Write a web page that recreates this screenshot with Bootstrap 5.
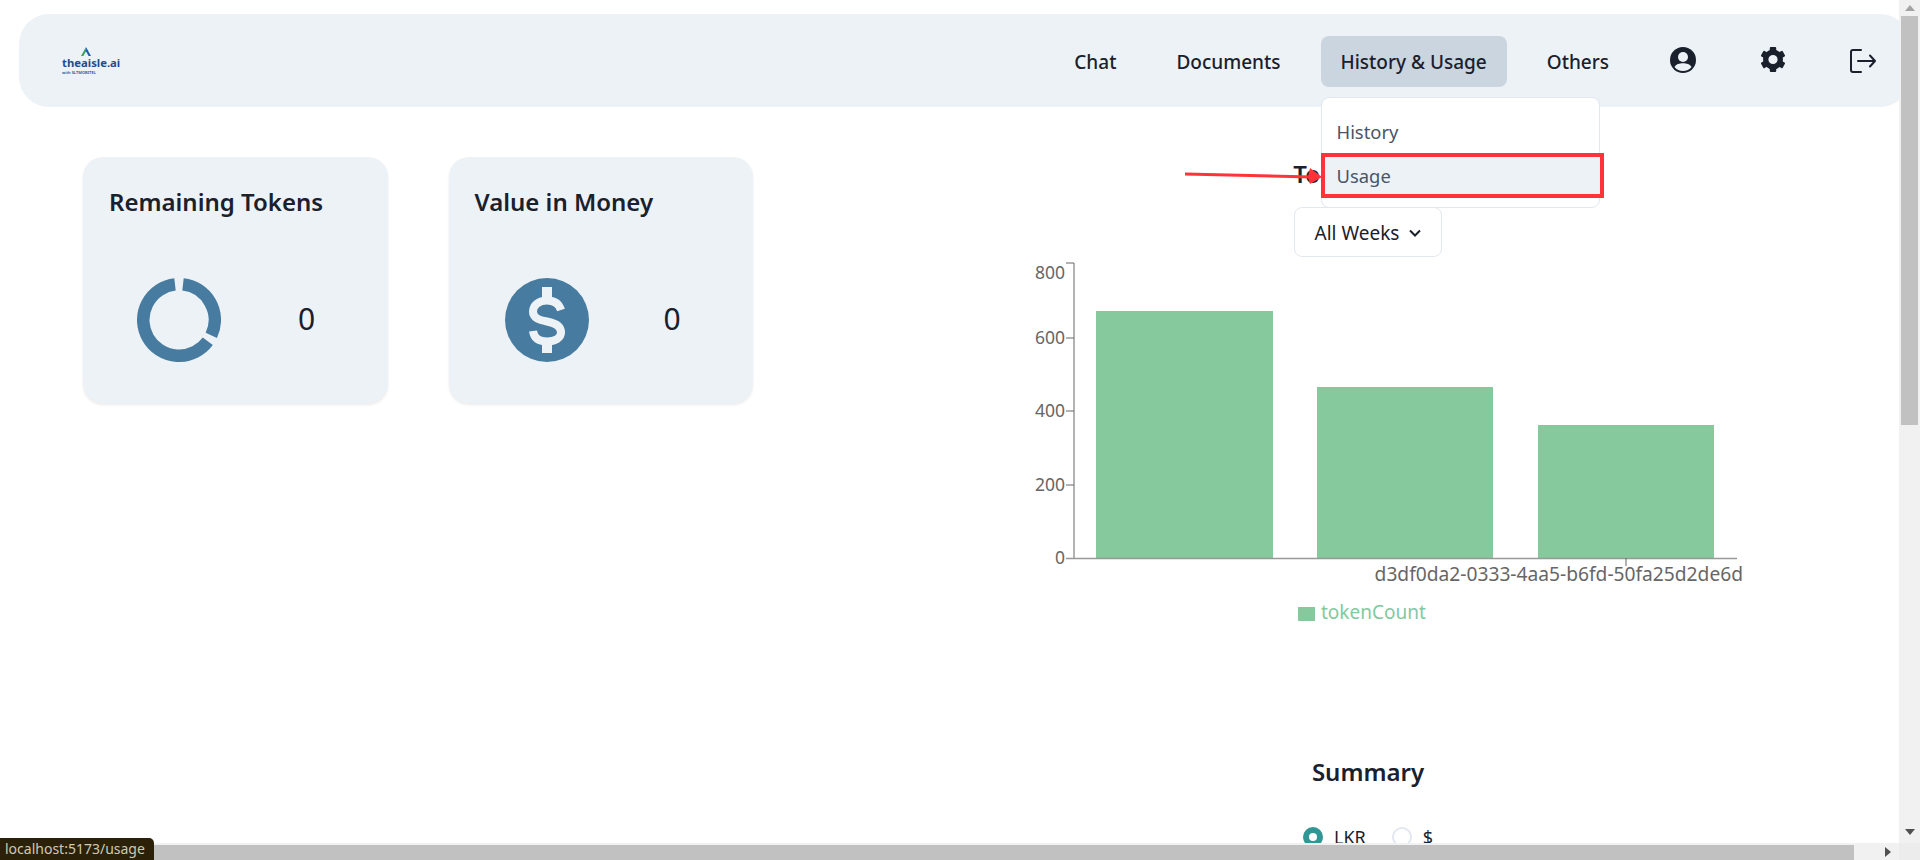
<!DOCTYPE html>
<html lang="en">
<head>
  <meta charset="UTF-8">
  <title>Usage - theaisle.ai</title>
  <link href="https://cdn.jsdelivr.net/npm/bootstrap@5.3.0/dist/css/bootstrap.min.css" rel="stylesheet">
  <style>
    body { font-family: "Noto Sans", "Open Sans", sans-serif; color: #1a202c; background: #fff; }
    .page-view { min-width: 0; }

    /* top bar */
    .top-bar { margin: 14px -11px 0 19px; height: 93px; padding: 0 14px 0 43px; background: #edf2f7; border-radius: 30px; }
    .logo-box { width: 60px; }
    .logo-mark { margin-left: 17px; }
    .logo-name { font-size: 11.3px; font-weight: 700; line-height: 11px; color: #1f4e8c; }
    .logo-sub { font-size: 4px; line-height: 5px; color: #1f4e8c; margin-top: 2px; font-weight: 600; }
    .top-bar .navbar-nav { margin-top: 2px; }
    .top-bar .navbar-nav .nav-link { height: 51px; padding: 2px 20px 0; margin-left: 20px; font-size: 19px; font-weight: 500; color: #1a202c; border-radius: 8px; display: flex; align-items: center; }
    .top-bar .navbar-nav .nav-link.is-open { background: #cbd5e0; }
    .top-bar .navbar-nav .nav-link svg { margin-top: -6px; }
    .top-bar .navbar-nav .nav-link svg.logout-icon { margin-top: -4px; }
    .top-bar .navbar-nav .nav-link.icon-first { margin-left: 21px; }
    .top-bar .navbar-nav .nav-link.icon-next { margin-left: 25px; }
    .top-bar .navbar-nav .dropdown-menu.menu-panel { position: absolute; top: 61px; left: 20px; width: 279px; height: 111px; padding: 12px 0 0; margin: 0; border: 1px solid #e2e8f0; border-radius: 8px; font-size: 18.4px; }
    .menu-panel .dropdown-item { height: 43px; padding: 0 15px; display: flex; align-items: center; color: #4a5568; }
    .menu-panel .dropdown-item.is-marked { margin-top: 1px; background: #edf2f7; outline: 4px solid #ff3338; outline-offset: -3px; width: 281px; }

    /* cards */
    .left-panel { width: 960px; padding: 50px 0 0 83px; gap: 61px; }
    .stat-box { width: 304.5px; height: 246px; padding: 27px 26px 0; background: #edf2f7; border: 0; border-radius: 20px; box-shadow: 0 2px 3px rgba(0,0,0,.08); }
    .stat-title { font-size: 24px; font-weight: 600; line-height: 36px; margin: 0; }
    .stat-row { margin-top: 58px; padding-left: 28px; }
    .stat-num { margin-left: 77px; margin-top: -2px; font-size: 30px; line-height: 1; color: #1a202c; }
    .stat-money .stat-row { padding-left: 30px; }
    .stat-money .stat-num { margin-left: 75px; }

    /* right side */
    .right-panel { width: 816px; padding-top: 49px; }
    .side-title { font-size: 24px; font-weight: 600; line-height: 36px; margin: 0; }
    .week-btn { width: 148px; height: 50px; margin-top: 15px; padding: 2px 0 0; border: 1px solid #e2e8f0; border-radius: 8px; font-size: 19px; color: #1a202c; background: #fff; gap: 10px; }
    .chart-svg { display: block; width: 816px; height: 383px; }
    .chart-svg text { font-family: "Noto Sans", sans-serif; font-size: 17.5px; fill: #666; }
    .chart-svg text.id-text { font-size: 19.2px; }
    .chart-svg text.legend-text { font-size: 19px; fill: #82ca9d; }
    .summary-title { margin-top: 114px; }
    .cur-row { margin-top: 37px; font-size: 18px; gap: 26px; line-height: 20px; }
    .cur-row .form-check-input { width: 20px; height: 20px; margin: 0 11px 0 0; border: 2px solid #e2e8f0; }
    .cur-row .form-check-input:checked { background-color: #319795; border-color: #319795; }

    /* fake browser chrome */
    .scroll-v { width: 21px; background: #f1f1f1; }
    .scroll-v-head { height: 16px; }
    .scroll-v-foot { height: 22px; }
    .scroll-v-thumb { width: 17px; height: 409px; margin-left: 2px; background: #c1c1c1; }
    .scroll-h { height: 17px; background: #f1f1f1; }
    .scroll-h-thumb { width: 1854px; margin-top: 2px; background: #c1c1c1; }
    .scroll-corner { width: 21px; background: #ececec; }
    .arrow-up { border: 5px solid transparent; border-top: 0; border-bottom: 6px solid #a3a3a3; }
    .arrow-down { border: 5px solid transparent; border-bottom: 0; border-top: 6px solid #505050; }
    .arrow-right { border: 5px solid transparent; border-right: 0; border-left: 6px solid #505050; }
    .status-tip { left: 0; bottom: 0; width: 154px; height: 22px; padding-left: 5px; background: #2b2108; color: #cdc9b4; font-size: 14px; line-height: 22px; border-top-right-radius: 5px; }
    .mark-arrow { left: 1180px; top: 160px; }
  </style>
</head>
<body class="overflow-hidden">
  <div class="d-flex flex-column vh-100 position-relative">
    <div class="d-flex flex-grow-1 overflow-hidden">
      <div class="page-view flex-grow-1 overflow-hidden position-relative">

        <nav class="navbar navbar-expand top-bar">
          <a class="logo-box d-block text-decoration-none" href="#">
            <svg class="d-block logo-mark" width="14" height="10" viewBox="0 0 14 10"><path d="M7 0 12 9H9.6L7 4.2Z" fill="#1f5fa8"/><path d="M7 0 2 9h2.4L7 4.2Z" fill="#3aa655"/></svg>
            <div class="logo-name">theaisle.ai</div>
            <div class="logo-sub">with SLTMOBITEL</div>
          </a>
          <ul class="navbar-nav ms-auto align-items-center">
            <li class="nav-item"><a class="nav-link" href="#">Chat</a></li>
            <li class="nav-item"><a class="nav-link" href="#">Documents</a></li>
            <li class="nav-item dropdown position-relative">
              <a class="nav-link is-open" href="#">History &amp; Usage</a>
              <div class="dropdown-menu show menu-panel">
                <a class="dropdown-item" href="#">History</a>
                <a class="dropdown-item is-marked" href="#">Usage</a>
              </div>
            </li>
            <li class="nav-item"><a class="nav-link" href="#">Others</a></li>
            <li class="nav-item">
              <a class="nav-link icon-first" href="#" aria-label="Profile">
                <svg width="26" height="26" viewBox="0 0 26 26"><circle cx="13" cy="13" r="13" fill="#1a202c"/><circle cx="13" cy="10" r="5" fill="#edf2f7"/><path d="M4.5 20C6 17 9.5 16.2 13 16.2s7 .8 8.5 3.8c-2 2.5-5 4-8.5 4s-6.500-1.500-8.500-4Z" fill="#edf2f7"/></svg>
              </a>
            </li>
            <li class="nav-item">
              <a class="nav-link icon-next" href="#" aria-label="Settings">
                <svg width="24" height="25" viewBox="0 0 24 25" fill="#1a202c">
                  <circle cx="12" cy="12.500" r="7.300" fill="none" stroke="#1a202c" stroke-width="5.400"/>
                  <rect x="8.800" y="0" width="6.400" height="6" rx="1"/>
                  <rect x="8.800" y="0" width="6.400" height="6" rx="1" transform="rotate(60 12 12.500)"/>
                  <rect x="8.800" y="0" width="6.400" height="6" rx="1" transform="rotate(120 12 12.500)"/>
                  <rect x="8.800" y="0" width="6.400" height="6" rx="1" transform="rotate(180 12 12.500)"/>
                  <rect x="8.800" y="0" width="6.400" height="6" rx="1" transform="rotate(240 12 12.500)"/>
                  <rect x="8.800" y="0" width="6.400" height="6" rx="1" transform="rotate(300 12 12.500)"/>
                </svg>
              </a>
            </li>
            <li class="nav-item">
              <a class="nav-link icon-next" href="#" aria-label="Log out">
                <svg class="logout-icon" width="26" height="24" viewBox="0 0 26 24" fill="none" stroke="#1a202c" stroke-width="2" stroke-linecap="round" stroke-linejoin="round"><path d="M11 1H3a2 2 0 0 0-2 2v18a2 2 0 0 0 2 2h8"/><path d="M8 12h17M20 6.500l5 5.500-5 5.500"/></svg>
              </a>
            </li>
          </ul>
        </nav>

        <main class="d-flex">
          <section class="left-panel d-flex align-items-start">
            <div class="card stat-box">
              <h5 class="stat-title">Remaining Tokens</h5>
              <div class="stat-row d-flex align-items-center">
                <svg width="84" height="84" viewBox="0 0 84 84" fill="none" stroke="#477ca0" stroke-width="12.500"><path d="M46 6.400A35.800 35.800 0 0 1 74.300 57.400"/><path d="M70.800 63.300A35.800 35.800 0 1 1 38 6.400"/></svg>
                <span class="stat-num">0</span>
              </div>
            </div>
            <div class="card stat-box stat-money">
              <h5 class="stat-title">Value in Money</h5>
              <div class="stat-row d-flex align-items-center">
                <svg width="84" height="84" viewBox="0 0 84 84"><circle cx="42" cy="42" r="42" fill="#477ca0"/><path d="M56 32C54 25.500 49 22.500 42 22.500 34 22.500 28 27 28 33.500 28 40 34 42 42 43.500 50 45 56 48 56 54.500 56 60 50 63.500 42 63.500 34 63.500 29 60 28 53" fill="none" stroke="#edf2f7" stroke-width="8"/><rect x="37" y="9" width="10" height="14" fill="#edf2f7"/><rect x="37" y="63" width="10" height="12" fill="#edf2f7"/></svg>
                <span class="stat-num">0</span>
              </div>
            </div>
          </section>

          <section class="right-panel d-flex flex-column align-items-center">
            <h5 class="side-title">Token Usage</h5>
            <button class="btn week-btn d-flex align-items-center justify-content-center" type="button">
              All Weeks
              <svg width="12" height="8" viewBox="0 0 12 8" fill="none" stroke="#1a202c" stroke-width="2"><path d="M1 1.500 6 6.500l5-5"/></svg>
            </button>
            <svg class="chart-svg" viewBox="960 257 816 383">
              <g fill="#85c99d">
                <rect x="1096" y="311" width="177" height="247"/>
                <rect x="1317" y="387" width="176" height="171"/>
                <rect x="1538" y="425" width="176" height="133"/>
              </g>
              <path d="M1074 263V558M1066 263h8M1066 338h8M1066 411h8M1066 485h8" stroke="#666" fill="none"/>
              <path d="M1066 558.500H1737" stroke="#999" stroke-width="1.500"/>
              <path d="M1626 558V566" stroke="#666"/>
              <text x="1065" y="279" text-anchor="end">800</text>
              <text x="1065" y="344" text-anchor="end">600</text>
              <text x="1065" y="417" text-anchor="end">400</text>
              <text x="1065" y="491" text-anchor="end">200</text>
              <text x="1065" y="564" text-anchor="end">0</text>
              <text class="id-text" x="1743" y="581" text-anchor="end">d3df0da2-0333-4aa5-b6fd-50fa25d2de6d</text>
              <rect x="1298" y="607" width="17" height="14" fill="#85c99d"/>
              <text class="legend-text" x="1321" y="619">tokenCount</text>
            </svg>
            <h5 class="side-title summary-title">Summary</h5>
            <div class="cur-row d-flex">
              <label class="d-flex align-items-center"><input class="form-check-input" type="radio" name="cur" checked>LKR</label>
              <label class="d-flex align-items-center"><input class="form-check-input" type="radio" name="cur">$</label>
            </div>
          </section>
        </main>

        <svg class="mark-arrow position-absolute" width="145" height="30" viewBox="0 0 145 30" fill="#ff3338"><path d="M5 14 132 17" stroke="#ff3338" stroke-width="3"/><path d="M130 8 142 17 130 24 128 17Z"/></svg>
      </div>

      <div class="scroll-v d-flex flex-column">
        <div class="scroll-v-head d-flex justify-content-center align-items-center"><span class="arrow-up"></span></div>
        <div class="scroll-v-thumb"></div>
        <div class="flex-grow-1"></div>
        <div class="scroll-v-foot d-flex justify-content-center align-items-center"><span class="arrow-down"></span></div>
      </div>
    </div>

    <div class="scroll-h d-flex">
      <div class="scroll-h-thumb"></div>
      <div class="flex-grow-1 d-flex justify-content-end align-items-center pe-2"><span class="arrow-right"></span></div>
      <div class="scroll-corner"></div>
    </div>

    <div class="status-tip position-absolute">localhost:5173/usage</div>
  </div>
</body>
</html>
